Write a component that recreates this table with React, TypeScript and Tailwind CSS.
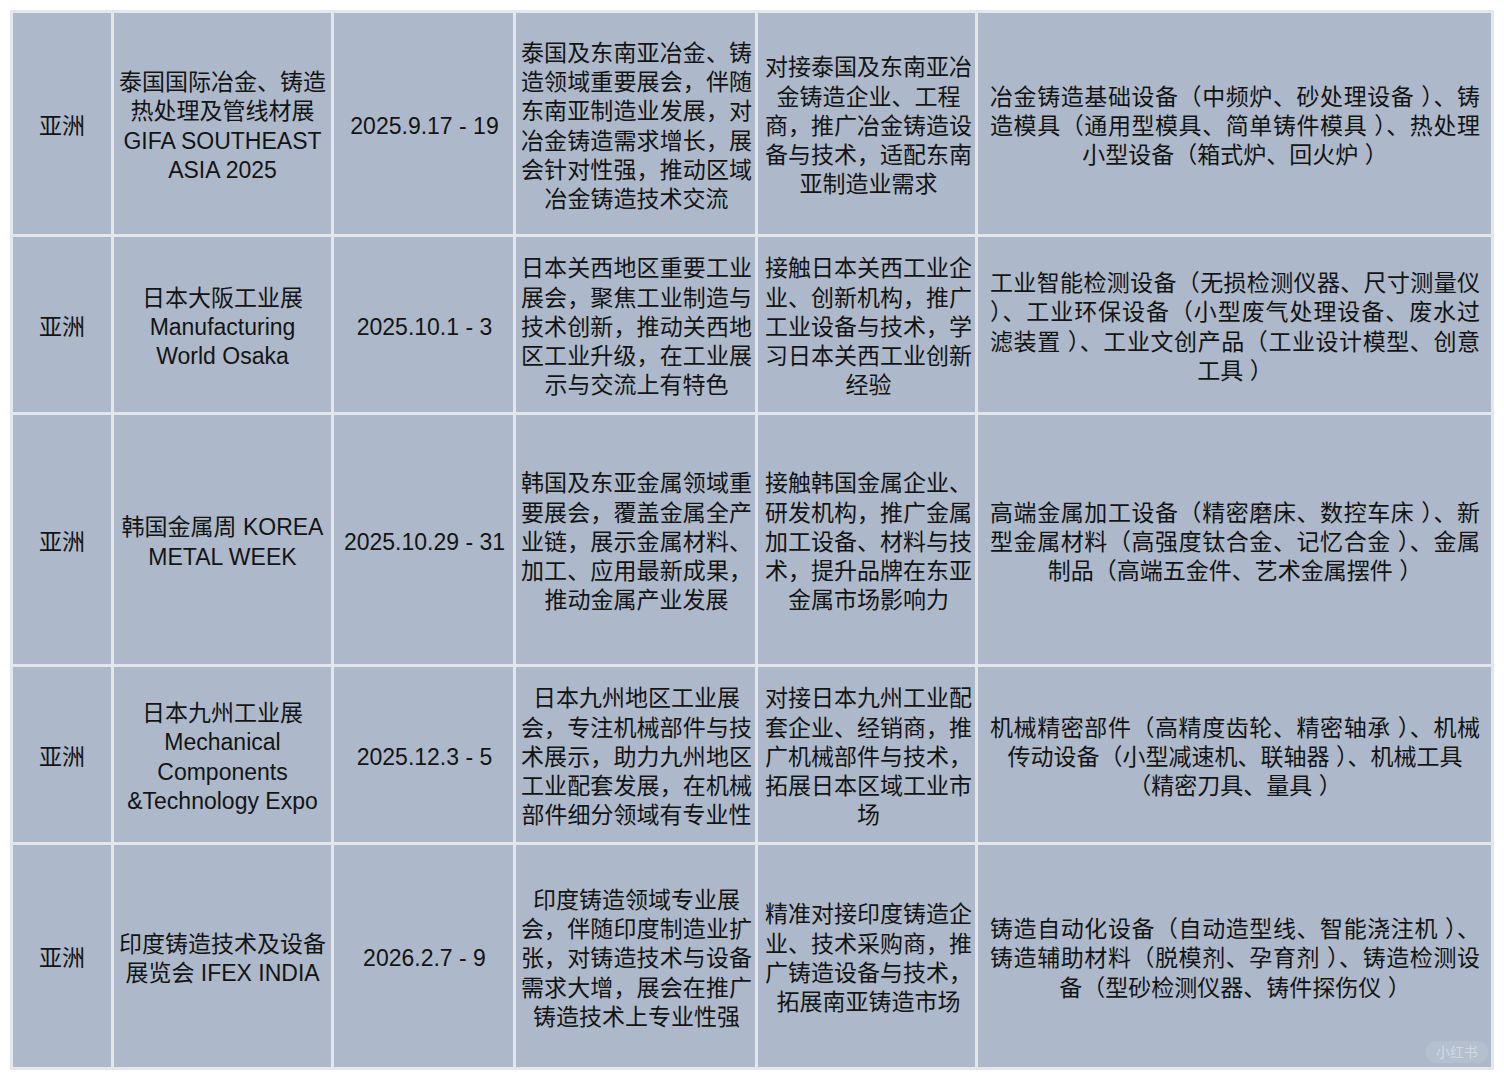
type Line = { t: string; c?: boolean };

type Row = {
  region: string;
  name: string[];
  date: string;
  intro: Line[];
  goal: Line[];
  products: Line[];
  h: string;
};

const j = (t: string): Line => ({ t });
const c = (t: string): Line => ({ t, c: true });

const rows: Row[] = [
  {
    region: "亚洲",
    name: ["泰国国际冶金、铸造", "热处理及管线材展", "GIFA SOUTHEAST", "ASIA 2025"],
    date: "2025.9.17 - 19",
    intro: [
      j("泰国及东南亚冶金、铸"),
      j("造领域重要展会，伴随"),
      j("东南亚制造业发展，对"),
      j("冶金铸造需求增长，展"),
      j("会针对性强，推动区域"),
      c("冶金铸造技术交流"),
    ],
    goal: [
      j("对接泰国及东南亚冶"),
      c("金铸造企业、工程"),
      j("商，推广冶金铸造设"),
      j("备与技术，适配东南"),
      c("亚制造业需求"),
    ],
    products: [
      j("冶金铸造基础设备（中频炉、砂处理设备 ）、铸"),
      j("造模具（通用型模具、简单铸件模具 ）、热处理"),
      c("小型设备（箱式炉、回火炉 ）"),
    ],
    h: "h-[221px]",
  },
  {
    region: "亚洲",
    name: ["日本大阪工业展", "Manufacturing", "World Osaka"],
    date: "2025.10.1 - 3",
    intro: [
      j("日本关西地区重要工业"),
      j("展会，聚焦工业制造与"),
      j("技术创新，推动关西地"),
      j("区工业升级，在工业展"),
      c("示与交流上有特色"),
    ],
    goal: [
      j("接触日本关西工业企"),
      j("业、创新机构，推广"),
      j("工业设备与技术，学"),
      j("习日本关西工业创新"),
      c("经验"),
    ],
    products: [
      j("工业智能检测设备（无损检测仪器、尺寸测量仪"),
      j("）、工业环保设备（小型废气处理设备、废水过"),
      j("滤装置 ）、工业文创产品（工业设计模型、创意"),
      c("工具 ）"),
    ],
    h: "h-[175px]",
  },
  {
    region: "亚洲",
    name: ["韩国金属周 KOREA", "METAL WEEK"],
    date: "2025.10.29 - 31",
    intro: [
      j("韩国及东亚金属领域重"),
      j("要展会，覆盖金属全产"),
      j("业链，展示金属材料、"),
      j("加工、应用最新成果，"),
      c("推动金属产业发展"),
    ],
    goal: [
      j("接触韩国金属企业、"),
      j("研发机构，推广金属"),
      j("加工设备、材料与技"),
      j("术，提升品牌在东亚"),
      c("金属市场影响力"),
    ],
    products: [
      j("高端金属加工设备（精密磨床、数控车床 ）、新"),
      j("型金属材料（高强度钛合金、记忆合金 ）、金属"),
      c("制品（高端五金件、艺术金属摆件 ）"),
    ],
    h: "h-[249px]",
  },
  {
    region: "亚洲",
    name: ["日本九州工业展", "Mechanical", "Components", "&Technology Expo"],
    date: "2025.12.3 - 5",
    intro: [
      c("日本九州地区工业展"),
      j("会，专注机械部件与技"),
      j("术展示，助力九州地区"),
      j("工业配套发展，在机械"),
      c("部件细分领域有专业性"),
    ],
    goal: [
      j("对接日本九州工业配"),
      j("套企业、经销商，推"),
      j("广机械部件与技术，"),
      j("拓展日本区域工业市"),
      c("场"),
    ],
    products: [
      j("机械精密部件（高精度齿轮、精密轴承 ）、机械"),
      c("传动设备（小型减速机、联轴器 ）、机械工具"),
      c("（精密刀具、量具 ）"),
    ],
    h: "h-[175px]",
  },
  {
    region: "亚洲",
    name: ["印度铸造技术及设备", "展览会 IFEX INDIA"],
    date: "2026.2.7 - 9",
    intro: [
      c("印度铸造领域专业展"),
      j("会，伴随印度制造业扩"),
      j("张，对铸造技术与设备"),
      j("需求大增，展会在推广"),
      c("铸造技术上专业性强"),
    ],
    goal: [
      j("精准对接印度铸造企"),
      j("业、技术采购商，推"),
      j("广铸造设备与技术，"),
      c("拓展南亚铸造市场"),
    ],
    products: [
      j("铸造自动化设备（自动造型线、智能浇注机 ）、"),
      j("铸造辅助材料（脱模剂、孕育剂 ）、铸造检测设"),
      c("备（型砂检测仪器、铸件探伤仪 ）"),
    ],
    h: "h-[222px]",
  },
];

function Lines({ lines }: { lines: Line[] }) {
  return (
    <div className="flex w-full flex-col">
      {lines.map((line, i) => (
        <div
          key={i}
          className={`whitespace-nowrap ${
            line.c ? "text-center" : "text-justify [text-align-last:justify]"
          }`}
        >
          {line.t}
        </div>
      ))}
    </div>
  );
}

// pt nudges the text block down a little, the reference sits ~3px lower
const cell = "flex items-center bg-[#adb9ca] pt-[6px]";

export default function App() {
  return (
    <div className="min-h-[1080px] bg-white p-[10px] font-['Liberation_Sans','Noto_Sans_CJK_SC',sans-serif] text-[23px] leading-[29.3px] text-[#141414]">
      <div className="relative grid w-[1484px] grid-cols-[98px_217px_179px_239px_217px_513px] gap-[3px] bg-[#e3e6ea] p-[3px]">
        {rows.map((row, r) => (
          <div key={r} className="contents">
            <div className={`${cell} ${row.h} justify-center`}>{row.region}</div>
            <div className={`${cell} justify-center`}>
              <div className="flex flex-col items-center">
                {row.name.map((n, i) => (
                  <div key={i} className="whitespace-nowrap">
                    {n}
                  </div>
                ))}
              </div>
            </div>
            <div className={`${cell} justify-center pl-[2px]`}>{row.date}</div>
            <div className={`${cell} pl-[5px] pr-[3px]`}>
              <Lines lines={row.intro} />
            </div>
            <div className={`${cell} pl-[7px] pr-[3px]`}>
              <Lines lines={row.goal} />
            </div>
            <div className={`${cell} pl-[12px] pr-[11px]`}>
              <Lines lines={row.products} />
            </div>
          </div>
        ))}
        <span className="absolute bottom-[7px] right-[6px] rounded-full bg-white/10 px-[10px] py-[2px] text-[14px] leading-[18px] text-white/40">
          小红书
        </span>
      </div>
    </div>
  );
}
